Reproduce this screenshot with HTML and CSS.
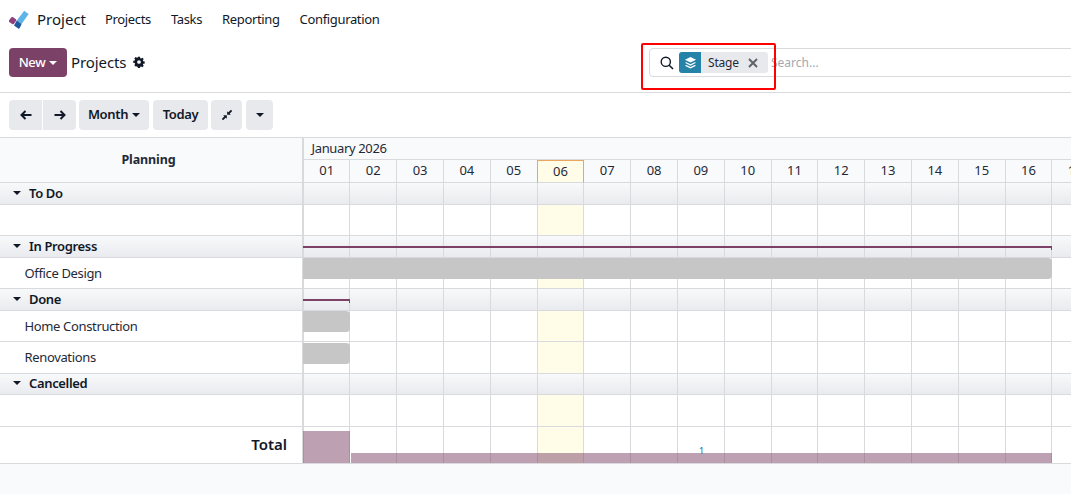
FILE: index.html
```html
<!DOCTYPE html>
<html lang="en">
<head>
<meta charset="utf-8">
<title>Project</title>
<link rel="stylesheet" href="styles.css">
</head>
<body>
<header class="nav">
  <svg class="logo" viewBox="0 0 20 20" width="20" height="20"><path d="M15.200.8 19.600 4 12.600 14 7.800 10.600z" fill="#5cb4e8"/><path d="M7.800 10.600 12.600 14 10.600 18.200 9.600 18.800 5 15.400z" fill="#1f5a9c"/><rect x="0.600" y="7.600" width="6" height="6" rx="1.500" transform="rotate(35 3.600 10.600)" fill="#8f3f7c"/></svg>
  <span class="brand">Project</span>
  <nav class="menu"><a>Projects</a><a>Tasks</a><a>Reporting</a><a>Configuration</a></nav>
</header>
<section class="panel">
  <div class="panel-left">
    <button class="new"><span class="lift">New</span><span class="caret white"></span></button>
    <span class="crumb">Projects</span>
    <svg class="gear" viewBox="-1 -1 18 18" width="12" height="12"><path fill-rule="evenodd" d="M6.500 0h3l.4 2.200 1.300.6L13 1.500l2.100 2.100-1.300 1.900.6 1.300 2.200.4v3l-2.200.4-.6 1.300 1.300 1.900-2.100 2.100-1.900-1.300-1.300.6-.4 2.200h-3l-.4-2.200-1.300-.6L3 14.900.9 12.800l1.300-1.900-.6-1.300L-.6 9.200v-3l2.200-.4.6-1.300L.9 2.600 3 .5l1.900 1.300 1.300-.6zM8 5.200a2.800 2.800 0 1 0 0 5.600 2.800 2.800 0 0 0 0-5.600z" fill="#111827"/></svg>
  </div>
  <div class="search">
    <svg class="mag" viewBox="0 0 14 14" width="14" height="14"><circle cx="5.800" cy="5.800" r="4.600" fill="none" stroke="#111827" stroke-width="1.400"/><path d="M9.200 9.200 13 13" stroke="#111827" stroke-width="1.600" fill="none"/></svg>
    <div class="facet">
      <span class="facet-icon"><svg viewBox="0 0 14 14" width="13" height="13"><path d="M7 1 13 4 7 7 1 4z" fill="#fff"/><path d="M2.600 6.600 1 7.400 7 10.400 13 7.400 11.400 6.600 7 8.800z" fill="#fff"/><path d="M2.600 9.600 1 10.400 7 13.400 13 10.400 11.400 9.600 7 11.800z" fill="#fff"/></svg></span>
      <span class="facet-label">Stage</span>
      <svg class="facet-x" viewBox="0 0 10 10" width="10" height="10"><path d="M1 1 9 9M9 1 1 9" stroke="#5f636a" stroke-width="2"/></svg>
    </div>
    <span class="placeholder">Search...</span>
  </div>
  <div class="annot"></div>
</section>
<section class="toolbar">
  <div class="btn-group">
    <button class="btn arrow"><svg viewBox="0 0 12 10" width="12" height="10"><path d="M11.500 5H2M5.500 1 1.500 5l4 4" fill="none" stroke="#111827" stroke-width="2"/></svg></button>
    <button class="btn arrow"><svg viewBox="0 0 12 10" width="12" height="10"><path d="M.5 5H10M6.500 1l4 4-4 4" fill="none" stroke="#111827" stroke-width="2"/></svg></button>
  </div>
  <button class="btn month"><span class="lift">Month</span><span class="caret"></span></button>
  <button class="btn today"><span class="lift">Today</span></button>
  <button class="btn compress"><svg viewBox="0 0 12 12" width="10" height="10"><path d="M11.500.5 7.800 4.200M.5 11.500 4.200 7.800" stroke="#111827" stroke-width="2.200" fill="none"/><path d="M6.200 1.400 6.200 5.800 10.600 5.800zM5.800 6.200 1.400 6.200 5.800 10.600z" fill="#111827"/></svg></button>
  <button class="btn more"><span class="caret"></span></button>
</section>
<main class="gantt">
  <div class="row head">
    <div class="name planning">Planning</div>
    <div class="time">
      <div class="month-title">January 2026</div>
      <div class="days"><b>01</b><b>02</b><b>03</b><b>04</b><b>05</b><b>06</b><b>07</b><b>08</b><b>09</b><b>10</b><b>11</b><b>12</b><b>13</b><b>14</b><b>15</b><b>16</b><b>17</b></div>
    </div>
  </div>
  <div class="row group"><div class="name"><span class="caret"></span>To Do</div><div class="cells"><i></i><i></i><i></i><i></i><i></i><i></i><i></i><i></i><i></i><i></i><i></i><i></i><i></i><i></i><i></i><i></i><i></i></div></div>
  <div class="row item"><div class="name"></div><div class="cells"><i></i><i></i><i></i><i></i><i></i><i></i><i></i><i></i><i></i><i></i><i></i><i></i><i></i><i></i><i></i><i></i><i></i></div></div>
  <div class="row group"><div class="name"><span class="caret"></span>In Progress</div><div class="cells"><i></i><i></i><i></i><i></i><i></i><i></i><i></i><i></i><i></i><i></i><i></i><i></i><i></i><i></i><i></i><i></i><i></i><span class="line span16"></span></div></div>
  <div class="row item"><div class="name">Office Design</div><div class="cells"><i></i><i></i><i></i><i></i><i></i><i></i><i></i><i></i><i></i><i></i><i></i><i></i><i></i><i></i><i></i><i></i><i></i><span class="pill span16"></span></div></div>
  <div class="row group"><div class="name"><span class="caret"></span>Done</div><div class="cells"><i></i><i></i><i></i><i></i><i></i><i></i><i></i><i></i><i></i><i></i><i></i><i></i><i></i><i></i><i></i><i></i><i></i><span class="line span1"></span></div></div>
  <div class="row item"><div class="name">Home Construction</div><div class="cells"><i></i><i></i><i></i><i></i><i></i><i></i><i></i><i></i><i></i><i></i><i></i><i></i><i></i><i></i><i></i><i></i><i></i><span class="pill span1"></span></div></div>
  <div class="row item"><div class="name">Renovations</div><div class="cells"><i></i><i></i><i></i><i></i><i></i><i></i><i></i><i></i><i></i><i></i><i></i><i></i><i></i><i></i><i></i><i></i><i></i><span class="pill span1 low"></span></div></div>
  <div class="row group"><div class="name"><span class="caret"></span>Cancelled</div><div class="cells"><i></i><i></i><i></i><i></i><i></i><i></i><i></i><i></i><i></i><i></i><i></i><i></i><i></i><i></i><i></i><i></i><i></i></div></div>
  <div class="row item"><div class="name"></div><div class="cells"><i></i><i></i><i></i><i></i><i></i><i></i><i></i><i></i><i></i><i></i><i></i><i></i><i></i><i></i><i></i><i></i><i></i></div></div>
  <div class="row total">
    <div class="name">Total</div>
    <div class="cells"><i></i><i></i><i></i><i></i><i></i><i></i><i></i><i></i><i></i><i></i><i></i><i></i><i></i><i></i><i></i><i></i><i></i>
      <span class="tot tall"></span><span class="tot flat"></span><span class="today-dots"></span><span class="tot-num">1</span>
    </div>
  </div>
</main>
</body>
</html>
```
FILE: styles.css
```css
* { box-sizing: border-box; }
html, body { margin: 0; height: 100%; }
body {
  width: 1071px;
  height: 494px;
  overflow: hidden;
  background: #f9fafb;
  color: #1f2937;
  font-family: "Noto Sans", "Open Sans", sans-serif;
  font-size: 13px;
  letter-spacing: -.35px;
}
button { font: inherit; letter-spacing: inherit; border: 0; cursor: pointer; }
.lift { margin-top: -2px; }

.nav {
  display: flex;
  align-items: center;
  height: 40px;
  padding-left: 9px;
  background: #fff;
}
.logo { flex: none; }
.brand { margin: -2px 0 0 8px; font-size: 15px; letter-spacing: 0; color: #111827; }
.menu { display: flex; gap: 20px; margin: -2px 0 0 19px; color: #111827; }

.panel {
  position: relative;
  display: flex;
  align-items: center;
  height: 53px;
  padding-bottom: 7px;
  background: #fff;
  border-bottom: 1px solid #d8dadd;
}
.panel-left {
  display: flex;
  align-items: center;
  flex: none;
  width: 649px;
  padding-left: 9px;
}
.new {
  display: flex;
  align-items: center;
  justify-content: center;
  width: 58px;
  height: 29px;
  background: #7c4166;
  color: #fff;
  border-radius: 4px;
  font-weight: 500;
}
.crumb { margin: -2px 0 0 4px; font-size: 15px; letter-spacing: -.1px; color: #111827; }
.gear { margin: -1px 0 0 7px; }

.caret {
  display: inline-block;
  width: 0;
  height: 0;
  margin-left: 4px;
  border-left: 4px solid transparent;
  border-right: 4px solid transparent;
  border-top: 4px solid #111827;
}
.caret.white { border-top-color: #fff; }

.search {
  display: flex;
  align-items: center;
  flex: none;
  width: 440px;
  height: 29px;
  padding-left: 10px;
  border: 1px solid #d8dadd;
  border-radius: 4px;
}
.facet {
  display: flex;
  align-items: center;
  width: 89px;
  height: 21px;
  margin-left: 5px;
  background: #e7e9ed;
  border-radius: 3px;
}
.facet-icon {
  display: flex;
  align-items: center;
  justify-content: center;
  width: 22px;
  height: 21px;
  background: #2582a8;
  border-radius: 3px 0 0 3px;
}
.facet-label { margin-left: 7px; font-size: 12px; letter-spacing: -.2px; color: #1f2937; }
.facet-x { margin-left: auto; margin-right: 10px; }
.placeholder { margin-left: 3px; color: #a4a8ae; font-size: 12px; letter-spacing: 0; }
.annot {
  position: absolute;
  left: 641px;
  top: 3px;
  width: 135px;
  height: 47px;
  border: 2px solid #f00;
  border-radius: 2px;
}

.toolbar {
  display: flex;
  align-items: center;
  gap: 4px;
  height: 45px;
  padding: 0 0 1px 9px;
  background: #fff;
  border-bottom: 1px solid #d8dadd;
}
.btn {
  display: flex;
  align-items: center;
  justify-content: center;
  height: 30px;
  padding: 0;
  background: #e7e9ed;
  color: #111827;
  border-radius: 4px;
  font-weight: 600;
}
.btn-group { display: flex; gap: 1px; margin-right: -1px; }
.arrow { width: 33px; }
.btn-group .arrow:first-child { border-radius: 4px 0 0 4px; }
.btn-group .arrow:last-child { border-radius: 0 4px 4px 0; }
.month { width: 70px; }
.today { width: 55px; }
.compress { width: 31px; margin-left: -1px; }
.more { width: 27px; }
.more .caret { margin-left: 0; }

.gantt { background: #fff; }
.row { display: flex; }
.name {
  flex: none;
  display: flex;
  align-items: center;
  width: 303px;
  border-right: 1px solid #d8dadd;
}
.head { height: 45.33px; background: #f9fafb; }
.planning {
  justify-content: center;
  padding: 0 5px 2px 0;
  font-weight: 700;
  font-size: 12.5px;
  letter-spacing: -.1px;
  color: #1f2937;
  border-bottom: 1px solid #d8dadd;
}
.time { flex: 1; min-width: 0; }
.month-title {
  display: flex;
  align-items: center;
  height: 22px;
  padding: 0 0 2px 7.500px;
  border-bottom: 1px solid #d8dadd;
  border-left: 1px solid #d8dadd;
  color: #1f2937;
}
.days { display: flex; height: 23.33px; letter-spacing: 0; }
.days b {
  flex: none;
  display: flex;
  align-items: center;
  justify-content: center;
  width: 46.8px;
  padding-bottom: 2px;
  font-weight: 400;
  color: #1f2937;
  border-right: 1px solid #d8dadd;
  border-bottom: 1px solid #d8dadd;
}
.days b:first-child { width: 47.4px; border-left: 1px solid #d8dadd; }
.days b:nth-child(6) {
  width: 47.8px;
  margin-left: -1px;
  background: #fffde8;
  border: 1px solid #e9a65c;
  border-bottom: 1px solid #d8dadd;
}

.cells { position: relative; flex: 1; display: flex; min-width: 0; }
.cells i {
  flex: none;
  width: 46.8px;
  border-right: 1px solid #d8dadd;
  border-bottom: 1px solid #d8dadd;
}
.cells i:first-child { width: 47.4px; border-left: 1px solid #d8dadd; }
.item .cells i:nth-child(6), .total .cells i:nth-child(6) { background: #fffde8; }

.item { height: 31.33px; }
.item .name { padding-left: 24.500px; color: #1f2937; border-bottom: 1px solid #d8dadd; }
.group { height: 21.67px; background: linear-gradient(#f8f9fa, #e9eaee); }
.group .name { padding: 0 0 2px 13px; font-weight: 600; color: #111827; border-bottom: 1px solid #d8dadd; }
.group .caret { margin: 0 8px 0 0; }
.total { height: 37.33px; }
.total .name {
  justify-content: flex-end;
  padding: 0 15px 2px 0;
  font-size: 15px;
  font-weight: 600;
  letter-spacing: 0;
  color: #111827;
  border-bottom: 1px solid #d8dadd;
}

.line {
  position: absolute;
  left: 0;
  top: 10px;
  height: 2px;
  background: #7c4166;
}
.line::after {
  content: "";
  position: absolute;
  right: 0;
  top: 2px;
  width: 1px;
  height: 2px;
  background: #7c4166;
}
.pill {
  position: absolute;
  left: 0;
  top: 0;
  height: 21px;
  background: #c6c6c6;
  border-radius: 0 4px 4px 0;
}
.pill.low { top: 1px; }
.span16 { width: 749px; }
.span1 { width: 47px; }

.tot { position: absolute; bottom: 1px; background: rgba(124, 65, 102, .5); }
.tall { left: 0; width: 47px; height: 32px; }
.flat { left: 48px; width: 701px; height: 10px; }
.today-dots {
  position: absolute;
  left: 236px;
  bottom: 1px;
  width: 44px;
  height: 9px;
  background: radial-gradient(circle, rgba(214, 138, 60, .8) 0 .5px, transparent .6px) 0 0 / 4px 4px;
}
.tot-num {
  position: absolute;
  left: 396px;
  bottom: 8px;
  font-size: 9px;
  line-height: 10px;
  color: #0f6f9a;
}
```
